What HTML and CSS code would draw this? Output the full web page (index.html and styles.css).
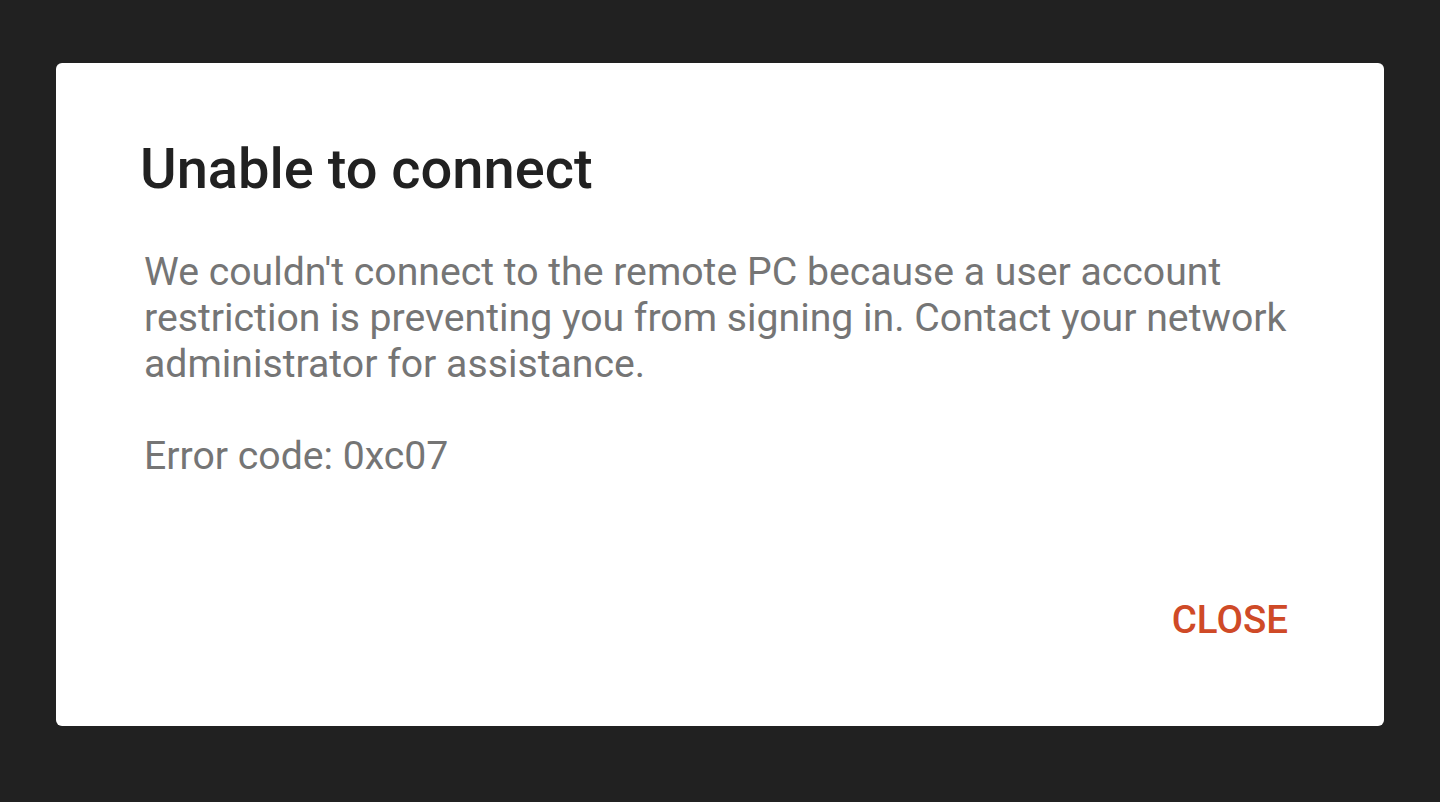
FILE: index.html
```html
<!DOCTYPE html>
<html lang="en">
<head>
<meta charset="utf-8">
<title>Unable to connect</title>
<link rel="stylesheet" href="styles.css">
</head>
<body>
<div class="dialog" role="dialog" aria-labelledby="dlg-title">
  <h1 class="dialog-title" id="dlg-title">Unable to connect</h1>
  <div class="dialog-message">
    <p class="msg">We couldn't connect to the remote PC because a user account restriction is preventing you from signing in. Contact your network administrator for assistance.</p>
    <p class="msg code">Error code: 0xc07</p>
  </div>
  <div class="dialog-actions">
    <button class="btn-text" type="button">CLOSE</button>
  </div>
</div>
</body>
</html>
```
FILE: styles.css
```css
html, body {
  margin: 0;
  height: 100%;
}
body {
  background: #212121;
  box-sizing: border-box;
  padding: 63px 56px 76px;
  font-family: Roboto, "Noto Sans", "Liberation Sans", sans-serif;
}
.dialog {
  box-sizing: border-box;
  height: 663px;
  background: #ffffff;
  border-radius: 6px;
  padding: 73px 56px 0 84px;
  display: flex;
  flex-direction: column;
}
.dialog-title {
  margin: 0;
  font-size: 56px;
  line-height: 66px;
  font-weight: 500;
  color: #212121;
}
.dialog-message {
  margin-top: 47px;
  padding-left: 4px;
}
.msg {
  margin: 0;
  font-size: 39.2px;
  line-height: 46px;
  color: #757575;
}
.msg.code {
  margin-top: 46px;
}
.dialog-actions {
  margin-top: auto;
  display: flex;
  justify-content: flex-end;
  padding: 0 40px 83px 0;
}
.btn-text {
  border: 0;
  background: none;
  padding: 0;
  font-family: inherit;
  font-size: 38.5px;
  line-height: 46px;
  font-weight: 500;
  color: #cf4a27;
  cursor: pointer;
}
```
